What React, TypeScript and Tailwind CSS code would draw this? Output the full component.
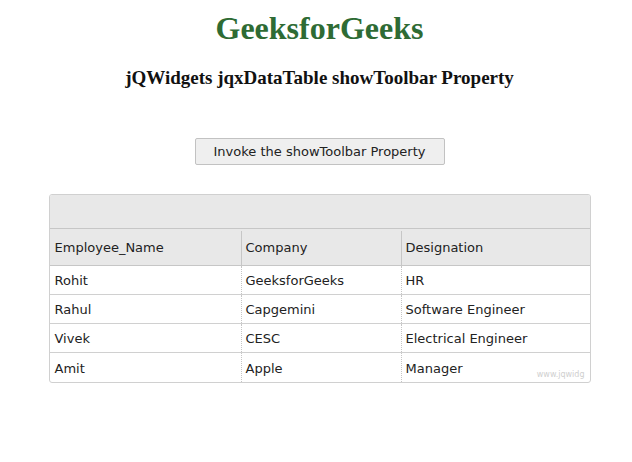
import React from 'react';

const rows = [
  { name: 'Rohit', company: 'GeeksforGeeks', designation: 'HR' },
  { name: 'Rahul', company: 'Capgemini', designation: 'Software Engineer' },
  { name: 'Vivek', company: 'CESC', designation: 'Electrical Engineer' },
  { name: 'Amit', company: 'Apple', designation: 'Manager' },
];

const App: React.FC = () => {
  return (
    <div className="min-h-[462px] w-[632px] pl-[7px] bg-white flex flex-col items-center">
      <h1 className="mt-[10px] text-[32px] leading-[37px] font-bold text-[#2e6b34] font-['Liberation_Serif',serif]">
        GeeksforGeeks
      </h1>
      <h3 className="mt-[20px] text-[19px] leading-[22px] font-bold text-[#111] font-['Liberation_Serif',serif]">
        jQWidgets jqxDataTable showToolbar Property
      </h3>

      <button className="mt-[49px] h-[27px] w-[250px] rounded-[2px] border border-[#c2c2c2] bg-[#efefef] text-[13px] text-[#222] font-['DejaVu_Sans',sans-serif]">
        Invoke the showToolbar Property
      </button>

      {/* Data table */}
      <div className="mt-[29px] w-[542px] rounded-[3px] border border-[#d0d0d0] overflow-hidden font-['DejaVu_Sans',sans-serif] text-[13px] text-[#222]">
        <div className="h-[34px] bg-[#e8e8e8] border-b border-[#c6c6c6]" />
        <div className="grid grid-cols-[191px_160px_1fr] h-[37px] pt-[2px] bg-[#e8e8e8] border-b border-[#c6c6c6]">
          <div className="flex items-center pl-[5px]">Employee_Name</div>
          <div className="flex items-center pl-[4px] border-l border-[#c6c6c6]">Company</div>
          <div className="flex items-center pl-[4px] border-l border-[#c6c6c6]">Designation</div>
        </div>
        {rows.map((r, i) => (
          <div
            key={r.name}
            className={`relative grid grid-cols-[191px_160px_1fr] h-[29px] ${i < rows.length - 1 ? 'border-b border-[#d0d0d0]' : ''}`}
          >
            <div className="flex items-center pl-[5px] pt-[2px]">{r.name}</div>
            <div className="flex items-center pl-[4px] pt-[2px] border-l border-dotted border-[#c6c6c6]">{r.company}</div>
            <div className="flex items-center pl-[4px] pt-[2px] border-l border-dotted border-[#c6c6c6]">{r.designation}</div>
            {i === rows.length - 1 && (
              <span className="absolute right-[5px] bottom-[1px] text-[8px] text-[#cfcfcf]">www.jqwidg</span>
            )}
          </div>
        ))}
      </div>
    </div>
  );
};

export default App;
